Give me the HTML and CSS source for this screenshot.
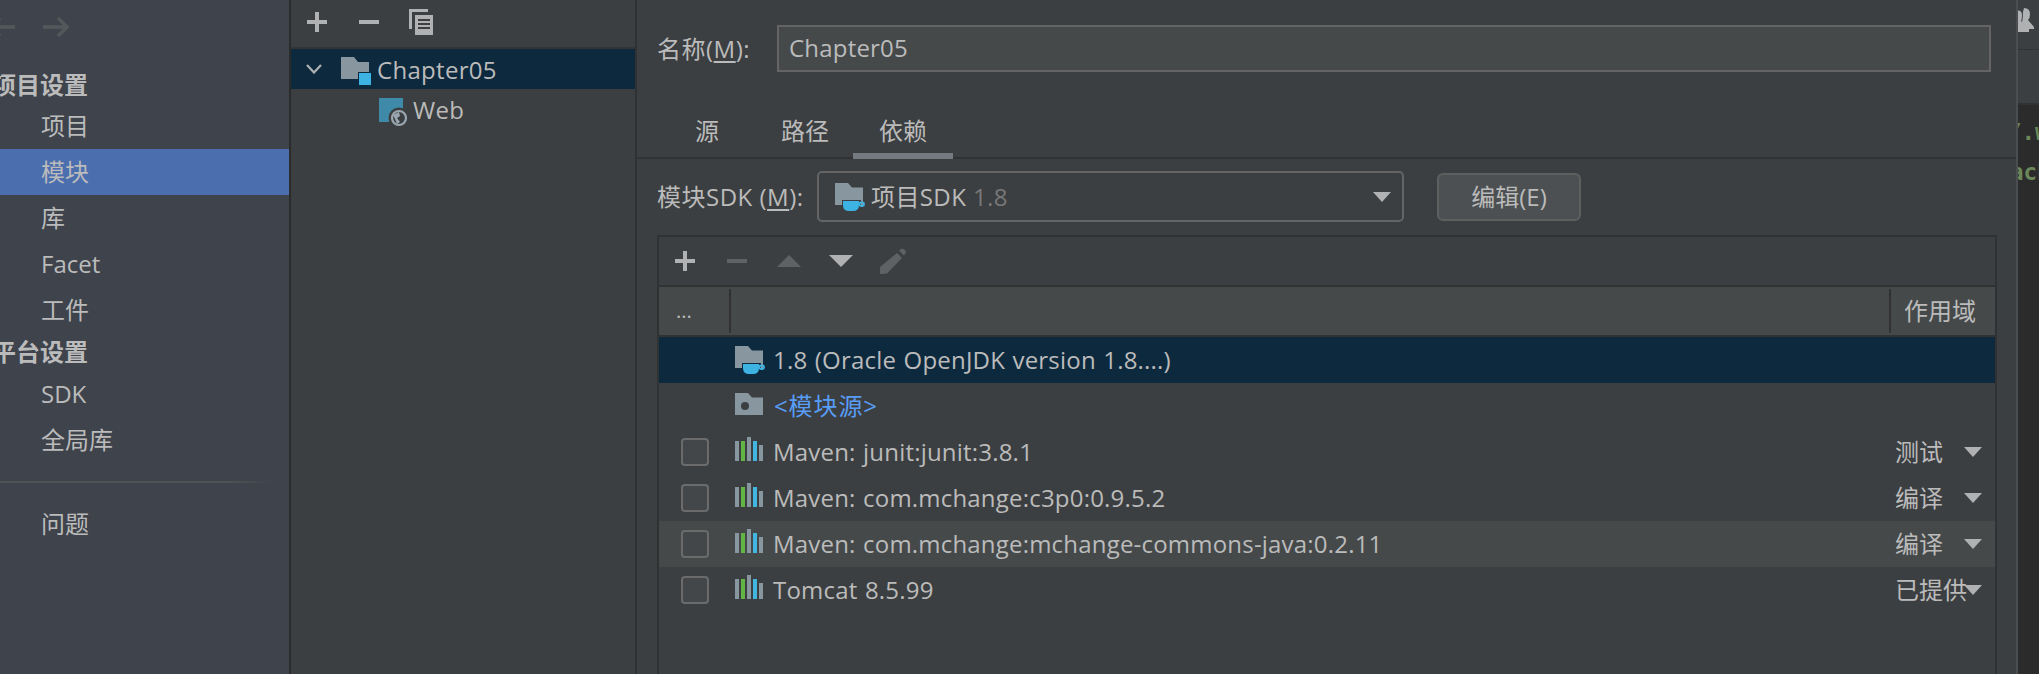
FILE: index.html
```html
<!DOCTYPE html>
<html lang="zh">
<head>
<meta charset="utf-8">
<title>项目结构</title>
<link rel="stylesheet" href="styles.css">
</head>
<body>
<div class="app">
  <aside class="side">
    <div class="nav-arrows">
      <svg width="26" height="20" viewBox="0 0 26 20"><path d="M26 10H2M11 1L2 10L11 19" fill="none" stroke="#55585a" stroke-width="3.500"/></svg>
      <svg width="26" height="20" viewBox="0 0 26 20"><path d="M0 10H24M15 1L24 10L15 19" fill="none" stroke="#55585a" stroke-width="3.500"/></svg>
    </div>
    <div class="side-head first">项目设置</div>
    <div class="side-item">项目</div>
    <div class="side-item selected">模块</div>
    <div class="side-item">库</div>
    <div class="side-item">Facet</div>
    <div class="side-item">工件</div>
    <div class="side-head">平台设置</div>
    <div class="side-item">SDK</div>
    <div class="side-item">全局库</div>
    <div class="side-sep"></div>
    <div class="side-item">问题</div>
  </aside>

  <section class="tree">
    <div class="tree-tools">
      <svg width="20" height="20" viewBox="0 0 20 20"><path d="M0 10H20M10 0V20" stroke="#afb1b3" stroke-width="4"/></svg>
      <svg width="20" height="20" viewBox="0 0 20 20"><path d="M0 10H20" stroke="#afb1b3" stroke-width="4"/></svg>
      <svg width="24" height="26" viewBox="0 0 24 26"><path d="M0 0H19V3H3V20H0Z" fill="#afb1b3"/><path d="M6 6H24V26H6Z" fill="#afb1b3"/><path d="M9 11H21M9 15H21M9 19H21" stroke="#3c3f41" stroke-width="2"/></svg>
    </div>
    <div class="tree-row selected">
      <svg class="chev" width="16" height="10" viewBox="0 0 16 10"><path d="M1 1L8 8.500L15 1" fill="none" stroke="#afb1b3" stroke-width="2.200"/></svg>
      <svg class="mod-icon" width="30" height="28" viewBox="0 0 30 28"><path d="M0 0H13L17 5H28V22H0Z" fill="#87969f"/><rect x="17" y="15" width="14" height="14" fill="#0d293e"/><rect x="18" y="16" width="12" height="12" fill="#3db3e3"/></svg>
      <span class="tree-label">Chapter05</span>
    </div>
    <div class="tree-row child">
      <svg class="web-icon" width="29" height="29" viewBox="0 0 29 29"><rect width="24" height="24" fill="#3f8aa8"/><circle cx="20" cy="20" r="10.500" fill="#3c3f41"/><circle cx="20" cy="20" r="7" fill="none" stroke="#9aa7b0" stroke-width="2.200"/><path d="M14 17L20 14L21 18L18 20L21 24L18 26L16 21Z" fill="#9aa7b0"/></svg>
      <span class="tree-label">Web</span>
    </div>
  </section>

  <main class="detail">
    <div class="name-row">
      <label class="label">名称(<u>M</u>):</label>
      <div class="name-input">Chapter05</div>
    </div>
    <div class="tabs">
      <div class="tab">源</div>
      <div class="tab tab-path">路径</div>
      <div class="tab tab-dep active">依赖</div>
    </div>
    <div class="sdk-row">
      <label class="label">模块SDK (<u>M</u>):</label>
      <div class="combo">
        <svg class="folder-jdk" width="30" height="28" viewBox="0 0 30 28"><path d="M0 0H13L17 4.500H28V22H0Z" fill="#87969f"/><path d="M7 17H26V22Q26 28 19 28H14Q7 28 7 22Z" fill="#3c3f41"/><path d="M8 18H24V22Q24 28 18 28H14Q8 28 8 22Z" fill="#3db3e3"/><rect x="24.500" y="19.500" width="4.500" height="3.500" rx="1.500" fill="none" stroke="#3db3e3" stroke-width="1.800"/></svg>
        <span class="combo-text">项目SDK <span class="dim">1.8</span></span>
        <svg class="combo-arrow" width="18" height="10" viewBox="0 0 18 10"><path d="M0 0H18L9 10Z" fill="#afb1b3"/></svg>
      </div>
      <div class="btn">编辑(E)</div>
    </div>

    <div class="table">
      <div class="table-tools">
        <span class="tool"><svg width="20" height="20" viewBox="0 0 20 20"><path d="M0 10H20M10 0V20" stroke="#afb1b3" stroke-width="4"/></svg></span>
        <span class="tool"><svg width="20" height="20" viewBox="0 0 20 20"><path d="M0 10H20" stroke="#5f6264" stroke-width="4"/></svg></span>
        <span class="tool"><svg width="24" height="12" viewBox="0 0 24 12"><path d="M0 12H24L12 0Z" fill="#5f6264"/></svg></span>
        <span class="tool"><svg width="24" height="12" viewBox="0 0 24 12"><path d="M0 0H24L12 12Z" fill="#afb1b3"/></svg></span>
        <span class="tool"><svg width="26" height="26" viewBox="0 0 26 26"><path d="M17 5L22 10L7 25.500L0 26V19Z" fill="#5f6264"/><path d="M19 2.500L21 1Q23 0 25 2Q26.500 4 25 6L24 7.500Z" fill="#5f6264"/></svg></span>
      </div>
      <div class="table-head">
        <div class="col-dots">...</div>
        <div class="col-main"></div>
        <div class="col-scope">作用域</div>
      </div>
      <div class="row selected">
        <div class="cell-check"></div>
        <span class="icon-slot"><svg width="30" height="28" viewBox="0 0 30 28"><path d="M0 0H13L17 4.500H28V22H0Z" fill="#87969f"/><path d="M7 17H26V22Q26 28 19 28H14Q7 28 7 22Z" fill="#0d293e"/><path d="M8 18H24V22Q24 28 18 28H14Q8 28 8 22Z" fill="#3db3e3"/><rect x="24.500" y="19.500" width="4.500" height="3.500" rx="1.500" fill="none" stroke="#3db3e3" stroke-width="1.800"/></svg></span>
        <span class="row-name">1.8 (Oracle OpenJDK version 1.8....)</span>
      </div>
      <div class="row">
        <div class="cell-check"></div>
        <span class="icon-slot raise-folder"><svg width="28" height="22" viewBox="0 0 28 22"><path d="M0 0H13L17 4.500H28V22H0Z" fill="#87969f"/><circle cx="10" cy="13" r="4" fill="#3c3f41"/></svg></span>
        <span class="row-name link">&lt;模块源&gt;</span>
      </div>
      <div class="row">
        <div class="cell-check"><i class="box"></i></div>
        <span class="icon-slot raise-lib"><svg width="28" height="24" viewBox="0 0 28 24"><rect y="4" width="4" height="20" fill="#87969f"/><rect x="6" y="4" width="4" height="20" fill="#62b543"/><rect x="12" width="4" height="24" fill="#87969f"/><rect x="18" y="4" width="4" height="20" fill="#40b6e0"/><rect x="24" y="8" width="4" height="16" fill="#87969f"/></svg></span>
        <span class="row-name">Maven: junit:junit:3.8.1</span>
        <span class="scope">测试</span>
        <svg width="18" height="10" viewBox="0 0 18 10"><path d="M0 0H18L9 10Z" fill="#afb1b3"/></svg>
      </div>
      <div class="row">
        <div class="cell-check"><i class="box"></i></div>
        <span class="icon-slot raise-lib"><svg width="28" height="24" viewBox="0 0 28 24"><rect y="4" width="4" height="20" fill="#87969f"/><rect x="6" y="4" width="4" height="20" fill="#62b543"/><rect x="12" width="4" height="24" fill="#87969f"/><rect x="18" y="4" width="4" height="20" fill="#40b6e0"/><rect x="24" y="8" width="4" height="16" fill="#87969f"/></svg></span>
        <span class="row-name">Maven: com.mchange:c3p0:0.9.5.2</span>
        <span class="scope">编译</span>
        <svg width="18" height="10" viewBox="0 0 18 10"><path d="M0 0H18L9 10Z" fill="#afb1b3"/></svg>
      </div>
      <div class="row hover">
        <div class="cell-check"><i class="box"></i></div>
        <span class="icon-slot raise-lib"><svg width="28" height="24" viewBox="0 0 28 24"><rect y="4" width="4" height="20" fill="#87969f"/><rect x="6" y="4" width="4" height="20" fill="#62b543"/><rect x="12" width="4" height="24" fill="#87969f"/><rect x="18" y="4" width="4" height="20" fill="#40b6e0"/><rect x="24" y="8" width="4" height="16" fill="#87969f"/></svg></span>
        <span class="row-name">Maven: com.mchange:mchange-commons-java:0.2.11</span>
        <span class="scope">编译</span>
        <svg width="18" height="10" viewBox="0 0 18 10"><path d="M0 0H18L9 10Z" fill="#afb1b3"/></svg>
      </div>
      <div class="row">
        <div class="cell-check"><i class="box"></i></div>
        <span class="icon-slot raise-lib"><svg width="28" height="24" viewBox="0 0 28 24"><rect y="4" width="4" height="20" fill="#87969f"/><rect x="6" y="4" width="4" height="20" fill="#62b543"/><rect x="12" width="4" height="24" fill="#87969f"/><rect x="18" y="4" width="4" height="20" fill="#40b6e0"/><rect x="24" y="8" width="4" height="16" fill="#87969f"/></svg></span>
        <span class="row-name">Tomcat 8.5.99</span>
        <span class="scope">已提供</span>
        <svg width="18" height="10" viewBox="0 0 18 10"><path d="M0 0H18L9 10Z" fill="#afb1b3"/></svg>
      </div>
    </div>
  </main>

  <aside class="behind">
    <div class="behind-top">
      <svg width="19" height="24" viewBox="0 0 19 24"><path d="M9 0Q15 0 15 6Q15 10 13 12L19 19V21H13L7 14Q8 10 8 4Z" fill="#afb1b3"/><path d="M0 3Q7 1 7 7Q7 11 6 13L14 20V24H0Z" fill="#afb1b3"/></svg>
    </div>
    <div class="behind-tabs"></div>
    <div class="editor">
      <div class="code code-1">/.w</div>
      <div class="code code-2">ach</div>
    </div>
  </aside>
</div>
</body>
</html>
```
FILE: styles.css
```css
* { box-sizing: border-box; }
html, body { margin: 0; padding: 0; height: 100%; overflow: hidden; }
body {
  background: #3c3f41;
  color: #bbbbbb;
  font-family: "Open Sans", "Noto Sans CJK SC", sans-serif;
  font-size: 24px;
  line-height: 30px;
  white-space: nowrap;
}
u { text-underline-offset: 3px; text-decoration-thickness: 1.5px; }

.app { display: flex; width: 2039px; height: 674px; overflow: hidden; }

/* settings sidebar */
.side {
  width: 291px;
  flex: none;
  background: #3e434c;
  border-right: 2px solid #2b2b2b;
  overflow: hidden;
}
.nav-arrows { display: flex; gap: 28px; height: 65px; padding-top: 17px; margin-left: -11px; }
.side-head {
  height: 38px;
  margin-left: -8px;
  font-weight: 700;
  display: flex;
  align-items: center;
}
.side-head.first { padding-top: 2px; }
.side-item {
  height: 46px;
  padding-left: 41px;
  display: flex;
  align-items: center;
}
.side-item.selected { background: #4b6eaf; }
.side-sep {
  height: 2px;
  margin: 18px 16px 18px 0;
  background: linear-gradient(to right, #4f5154 85%, #3e434c);
}

/* module tree */
.tree {
  width: 346px;
  flex: none;
  border-right: 2px solid #2f3132;
}
.tree-tools {
  height: 49px;
  border-bottom: 2px solid #323435;
  display: flex;
  align-items: center;
  gap: 32px;
  padding: 0 0 3px 16px;
}
.tree-tools svg:last-child { margin-left: -2px; }
.tree-row {
  height: 40px;
  display: flex;
  align-items: center;
}
.tree-label { padding-top: 2px; letter-spacing: 0.3px; }
.tree-row.selected { background: #0d293e; }
.chev { margin-left: 15px; }
.mod-icon { margin: 4px 6px 0 19px; }
.tree-row.child { padding-left: 88px; }
.web-icon { margin: 6px 5px 0 0; }

/* details */
.detail {
  width: 1381px;
  flex: none;
  border-right: 2px solid #4b4e50;
  overflow: hidden;
}
.name-row {
  display: flex;
  align-items: center;
  margin-top: 25px;
  padding-left: 20px;
}
.label { letter-spacing: 0.5px; }
.name-row .label { width: 120px; flex: none; }
.name-input {
  width: 1214px;
  height: 47px;
  border: 2px solid #646464;
  background: #45494a;
  padding: 0 0 2px 10px;
  display: flex;
  align-items: center;
  letter-spacing: 0.2px;
}
.tabs {
  height: 87px;
  margin-top: 0;
  padding-left: 32px;
  border-bottom: 2px solid #323232;
  display: flex;
  align-items: flex-end;
}
.tab {
  height: 50px;
  margin-bottom: -2px;
  padding: 0 26px;
  border-bottom: 6px solid transparent;
  display: flex;
  align-items: center;
}
.tab-path { margin-left: 10px; }
.tab-dep { margin-left: -2px; }
.tab.active { border-bottom-color: #747a80; }
.sdk-row {
  height: 51px;
  margin-top: 12px;
  display: flex;
  align-items: center;
  padding-left: 20px;
}
.sdk-row .label { width: 160px; flex: none; }
.combo {
  width: 587px;
  height: 51px;
  border: 2px solid #646464;
  border-radius: 5px;
  display: flex;
  align-items: center;
  padding: 0 11px 0 16px;
}
.folder-jdk { margin-right: 6px; }
.combo-text { letter-spacing: 0.4px; }
.dim { color: #787878; }
.combo-arrow { margin-left: auto; }
.btn {
  width: 144px;
  height: 48px;
  margin-left: 33px;
  border: 2px solid #5e6060;
  border-radius: 6px;
  background: #4c5052;
  display: flex;
  align-items: center;
  justify-content: center;
}

/* dependency table */
.table {
  width: 1340px;
  height: 460px;
  margin: 13px 0 0 20px;
  border: 2px solid #2f3132;
  border-bottom: none;
}
.table-tools {
  height: 50px;
  border-bottom: 2px solid #323232;
  display: flex;
  align-items: center;
}
.tool { width: 52px; display: flex; justify-content: center; }
.table-head {
  height: 50px;
  background: #45494a;
  border-bottom: 2px solid #323232;
  display: flex;
  align-items: stretch;
  padding: 2px 0;
}
.col-dots { width: 72px; border-right: 2px solid #323232; padding-left: 17px; display: flex; align-items: center; font-size: 20px; }
.col-main { flex: 1; }
.col-scope { width: 106px; border-left: 2px solid #323232; padding-left: 13px; display: flex; align-items: center; }
.row {
  height: 46px;
  display: flex;
  align-items: center;
  padding-right: 13px;
}
.row.selected { background: #0d293e; }
.row.hover { background: #45494a; }
.cell-check { width: 76px; padding-left: 22px; flex: none; display: flex; }
.box {
  width: 28px;
  height: 28px;
  border: 2px solid #6b6b6b;
  border-radius: 4px;
  background: #43474a;
  display: block;
}
.icon-slot { width: 39px; flex: none; display: flex; }
.raise-lib { margin-bottom: 6px; }
.raise-folder { margin-bottom: 4px; }
.row-name { flex: 1; letter-spacing: 0.2px; word-spacing: 1px; margin-left: -1px; }
.row-name.link { color: #589df6; letter-spacing: 0.9px; margin-left: 0; }
.scope { width: 69px; flex: none; }

/* window behind the dialog */
.behind { flex: 1; overflow: hidden; }
.behind-top { height: 50px; border-bottom: 1px solid #323232; padding-top: 8px; }
.behind-top svg { display: block; margin-left: -3px; }
.behind-tabs { height: 55px; border-bottom: 2px solid #323232; }
.editor {
  background: #2b2b2b;
  height: 569px;
  padding-top: 7px;
  font-family: "DejaVu Sans Mono", monospace;
  font-size: 22.500px;
  font-weight: 700;
  color: #6a8759;
}
.code { height: 40px; line-height: 40px; }
.code-1 { margin-left: -10px; }
.code-2 { margin-left: -8px; }
```
